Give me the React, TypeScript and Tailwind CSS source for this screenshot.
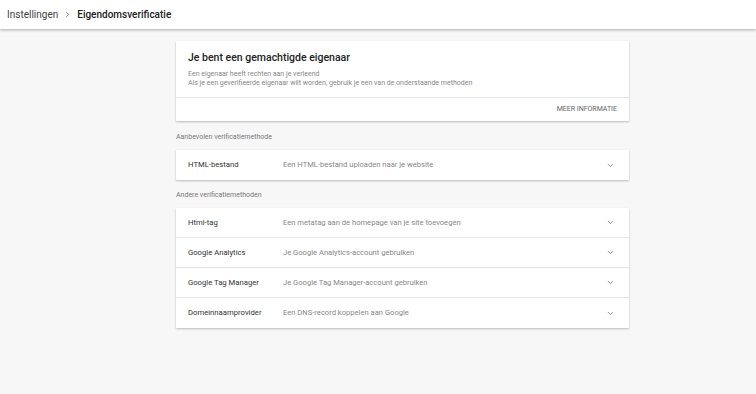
import { ChevronDown, ChevronRight } from 'lucide-react';

const otherMethods = [
  { name: 'Html-tag', desc: 'Een metatag aan de homepage van je site toevoegen' },
  { name: 'Google Analytics', desc: 'Je Google Analytics-account gebruiken' },
  { name: 'Google Tag Manager', desc: 'Je Google Tag Manager-account gebruiken' },
  { name: 'Domeinnaamprovider', desc: 'Een DNS-record koppelen aan Google' },
];

function MethodRow({ name, desc, last }: { name: string; desc: string; last?: boolean }) {
  return (
    <div className={`h-[30px] flex items-center pl-3 pr-[14px] ${last ? '' : 'border-b border-[#e6e6e6]'}`}>
      <div className="w-[95px] text-[7.7px] text-[#333]">{name}</div>
      <div className="flex-1 text-[7.6px] text-[#888]">{desc}</div>
      <ChevronDown size={9} strokeWidth={2.2} className="text-[#777]" />
    </div>
  );
}

export default function App() {
  return (
    <div className="w-[756px] h-[394px] bg-[#f7f7f7] overflow-hidden" style={{ fontFamily: 'Roboto, "Liberation Sans", sans-serif' }}>
      {/* top bar */}
      <div className="h-[29px] bg-white flex items-center px-[7px] shadow-[0_1px_3px_rgba(0,0,0,0.3)] relative z-10">
        <span className="text-[10px] text-[#444]">Instellingen</span>
        <ChevronRight size={9} strokeWidth={2} className="text-[#666] mx-[5px]" />
        <span className="text-[10px] font-medium text-[#222]">Eigendomsverificatie</span>
      </div>

      <div className="w-[453px] ml-[176px] pt-[12px]">
        {/* owner card */}
        <div className="bg-white shadow-[0_1px_2px_rgba(0,0,0,0.25)]">
          <div className="px-3 pt-[10px] h-[56px]">
            <h1 className="text-[10.5px] font-medium text-[#222] leading-[14px]">Je bent een gemachtigde eigenaar</h1>
            <p className="mt-[5px] text-[7px] leading-[8.5px] text-[#888]">
              Een eigenaar heeft rechten aan je verleend
              <br />
              Als je een geverifieerde eigenaar wilt worden, gebruik je een van de onderstaande methoden
            </p>
          </div>
          <div className="h-[24px] border-t border-[#e6e6e6] flex items-center justify-end pr-3">
            <span className="text-[7px] text-[#666]">MEER INFORMATIE</span>
          </div>
        </div>

        <div className="text-[7px] text-[#777] mt-[12px] mb-[8px] leading-[9px]">Aanbevolen verificatiemethode</div>
        <div className="bg-white shadow-[0_1px_2px_rgba(0,0,0,0.25)]">
          <MethodRow name="HTML-bestand" desc="Een HTML-bestand uploaden naar je website" last />
        </div>

        <div className="text-[7px] text-[#777] mt-[11px] mb-[8px] leading-[9px]">Andere verificatiemethoden</div>
        <div className="bg-white shadow-[0_1px_2px_rgba(0,0,0,0.25)]">
          {otherMethods.map((m, i) => (
            <MethodRow key={m.name} name={m.name} desc={m.desc} last={i === otherMethods.length - 1} />
          ))}
        </div>
      </div>
    </div>
  );
}
